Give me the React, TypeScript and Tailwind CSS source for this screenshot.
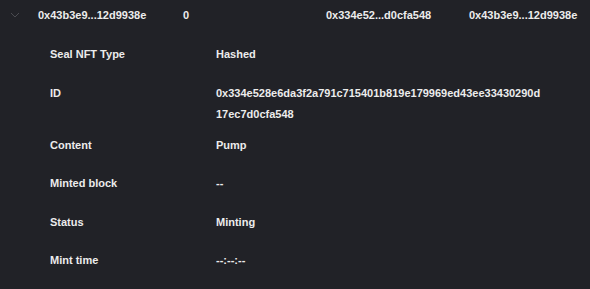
import React from "react";

const rows = [
  { label: "Seal NFT Type", value: "Hashed" },
  {
    label: "ID",
    value: "0x334e528e6da3f2a791c715401b819e179969ed43ee33430290d17ec7d0cfa548",
  },
  { label: "Content", value: "Pump" },
  { label: "Minted block", value: "--" },
  { label: "Status", value: "Minting" },
  { label: "Mint time", value: "--:--:--" },
];

function Chevron() {
  return (
    <svg width="10" height="6" viewBox="0 0 10 6" fill="none">
      <path d="M1 1l4 4 4-4" stroke="#4a4b50" strokeWidth="1" />
    </svg>
  );
}

export default function App() {
  return (
    <div
      className="w-[590px] h-[289px] bg-[#212227] text-[#ececec] text-[11px] font-bold overflow-hidden"
      style={{ fontFamily: '"Liberation Sans", Arial, sans-serif' }}
    >
      {/* header row */}
      <div className="flex items-center h-[30px]">
        <div className="w-[38px] flex justify-center pl-[2px] pr-[10px]">
          <Chevron />
        </div>
        <div className="w-[145px]">0x43b3e9...12d9938e</div>
        <div className="w-[143px]">0</div>
        <div className="w-[143px]">0x334e52...d0cfa548</div>
        <div className="flex-1">0x43b3e9...12d9938e</div>
      </div>

      {/* details */}
      <div className="pt-[9px] flex flex-col">
        {rows.map((row) => (
          <div
            key={row.label}
            className="flex items-start min-h-[38.5px] py-[5px] leading-[21px]"
          >
            <div className="w-[216px] pl-[50px] shrink-0">{row.label}</div>
            <div className="w-[327px] break-all">{row.value}</div>
          </div>
        ))}
      </div>
    </div>
  );
}
